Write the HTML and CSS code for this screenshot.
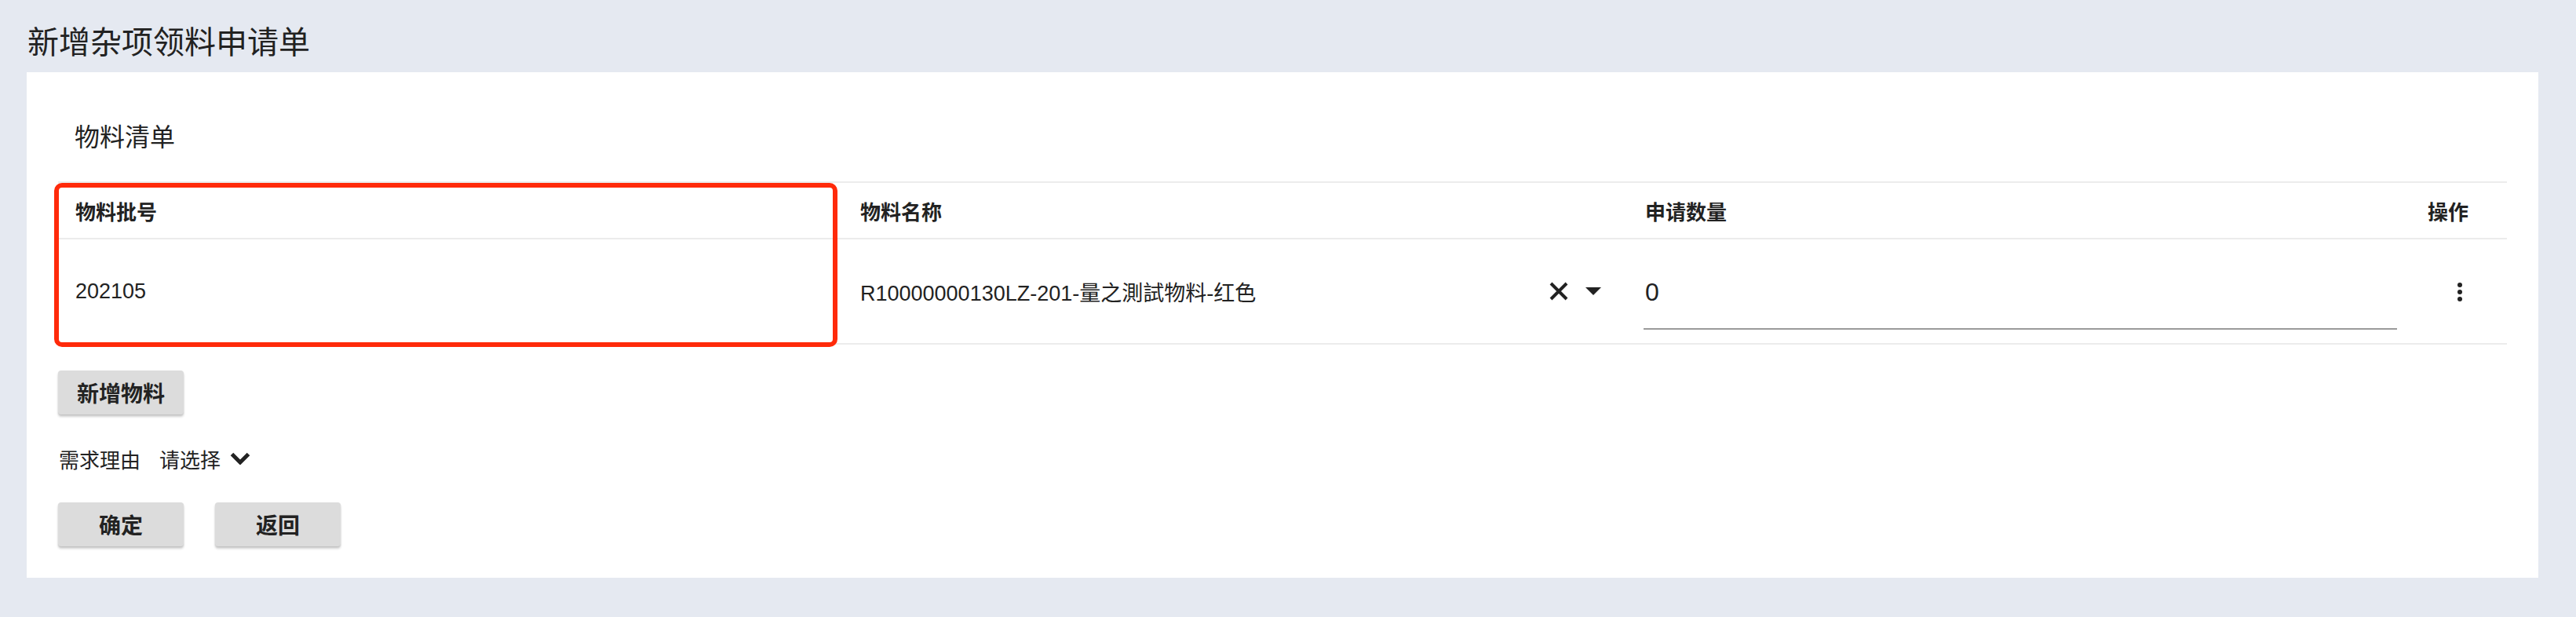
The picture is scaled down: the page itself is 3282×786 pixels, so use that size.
FILE: index.html
```html
<!DOCTYPE html>
<html lang="zh-CN">
<head>
    <meta charset="UTF-8">
    <meta name="viewport" content="width=device-width, initial-scale=1.0">
    <title>新增杂项领料申请单</title>
    <link rel="stylesheet" href="styles.css">
</head>
<body>
    <div class="page">
        <h1 class="page-title">新增杂项领料申请单</h1>

        <div class="card">
            <h2 class="section-title">物料清单</h2>

            <div class="table">
                <div class="row head">
                    <div class="cell">物料批号</div>
                    <div class="cell">物料名称</div>
                    <div class="cell">申请数量</div>
                    <div class="cell action">操作</div>
                </div>
                <div class="row body">
                    <div class="cell">202105</div>
                    <div class="cell name-cell">
                        <span class="name-text">R10000000130LZ-201-量之測試物料-红色</span>
                        <span class="adornments">
                            <svg class="icon-clear" width="24" height="24" viewBox="0 0 24 24">
                                <path d="M2 2 L22 22 M22 2 L2 22" stroke="#222" stroke-width="4" fill="none"/>
                            </svg>
                            <svg class="icon-drop" width="20" height="10" viewBox="0 0 20 10">
                                <path d="M0 0 L20 0 L10 10 Z" fill="#222"/>
                            </svg>
                        </span>
                    </div>
                    <div class="cell">
                        <div class="qty-field">0</div>
                    </div>
                    <div class="cell action">
                        <svg width="24" height="24" viewBox="0 0 24 24">
                            <circle cx="12" cy="3" r="3" fill="#222"/>
                            <circle cx="12" cy="12" r="3" fill="#222"/>
                            <circle cx="12" cy="21" r="3" fill="#222"/>
                        </svg>
                    </div>
                </div>
                <!-- 标注框 -->
                <div class="highlight"></div>
            </div>

            <button class="btn add-btn">新增物料</button>

            <div class="reason">
                <span class="reason-label">需求理由</span>
                <span class="reason-select">
                    请选择
                    <svg width="26" height="16" viewBox="0 0 26 16">
                        <path d="M2.5 2.5 L13 13 L23.5 2.5" stroke="#222" stroke-width="5" fill="none"/>
                    </svg>
                </span>
            </div>

            <div class="actions">
                <button class="btn">确定</button>
                <button class="btn">返回</button>
            </div>
        </div>
    </div>
</body>
</html>
```

FILE: styles.css
```css
* {
    margin: 0;
    padding: 0;
    box-sizing: border-box;
}

body {
    font-family: "Liberation Sans", "Noto Sans CJK SC", sans-serif;
    background: #e5e9f1;
    color: #222;
    height: 786px;
    overflow: hidden;
}

.page {
    padding: 0 0 0 34px;
}

.page-title {
    font-size: 40px;
    font-weight: 400;
    line-height: 40px;
    padding: 34px 0 18px 1px;
    color: #222;
}

.card {
    width: 3200px;
    background: #fff;
    padding: 40px;
}

.section-title {
    font-size: 32px;
    font-weight: 400;
    line-height: 40px;
    padding: 23px 21px 36px;
}

.table {
    position: relative;
    border-top: 2px solid #ececec;
}

.row {
    display: grid;
    grid-template-columns: 1000px 1000px 1002px 118px;
    align-items: center;
    border-bottom: 2px solid #ececec;
}

.row.head {
    height: 72px;
    font-size: 26px;
    font-weight: 700;
}

.row.body {
    height: 134px;
    font-size: 27px;
}

.cell {
    padding: 0 22px;
}

.cell.action {
    text-align: right;
    white-space: nowrap;
    padding-left: 0;
    padding-right: 48px;
}

.row.head .cell.action {
    padding-right: 49px;
}

.row.body .cell.action svg {
    display: inline-block;
    vertical-align: middle;
}

.name-cell {
    display: flex;
    align-items: center;
    padding-right: 34px;
}

.name-text {
    flex: 1;
    white-space: nowrap;
}

.adornments {
    display: flex;
    align-items: center;
    gap: 22px;
}

.adornments svg {
    display: block;
}

.qty-field {
    font-size: 32px;
    line-height: 40px;
    padding: 30px 0 26px 2px;
    border-bottom: 2px solid #9a9a9a;
    margin-left: -2px;
}

.highlight {
    position: absolute;
    left: -5px;
    top: 0;
    width: 998px;
    height: 209px;
    border: 6px solid #ff2a0a;
    border-radius: 10px;
    pointer-events: none;
}

.btn {
    font-family: "Roboto", "Noto Sans CJK SC", sans-serif;
    font-size: 28px;
    font-weight: 700;
    color: #222;
    background: #dcdcdc;
    border: none;
    border-radius: 4px;
    width: 160px;
    height: 56px;
    box-shadow: 0 3px 3px rgba(0, 0, 0, 0.18), 0 1px 2px rgba(0, 0, 0, 0.1);
    cursor: pointer;
}

.add-btn {
    display: block;
    margin-top: 33px;
}

.reason {
    display: flex;
    align-items: center;
    gap: 24px;
    font-size: 26px;
    line-height: 36px;
    margin-top: 41px;
    padding-left: 1px;
}

.reason-select {
    display: flex;
    align-items: center;
    gap: 12px;
}

.reason-select svg {
    display: block;
    margin-top: -6px;
}

.actions {
    display: flex;
    gap: 40px;
    margin-top: 35px;
}
```
